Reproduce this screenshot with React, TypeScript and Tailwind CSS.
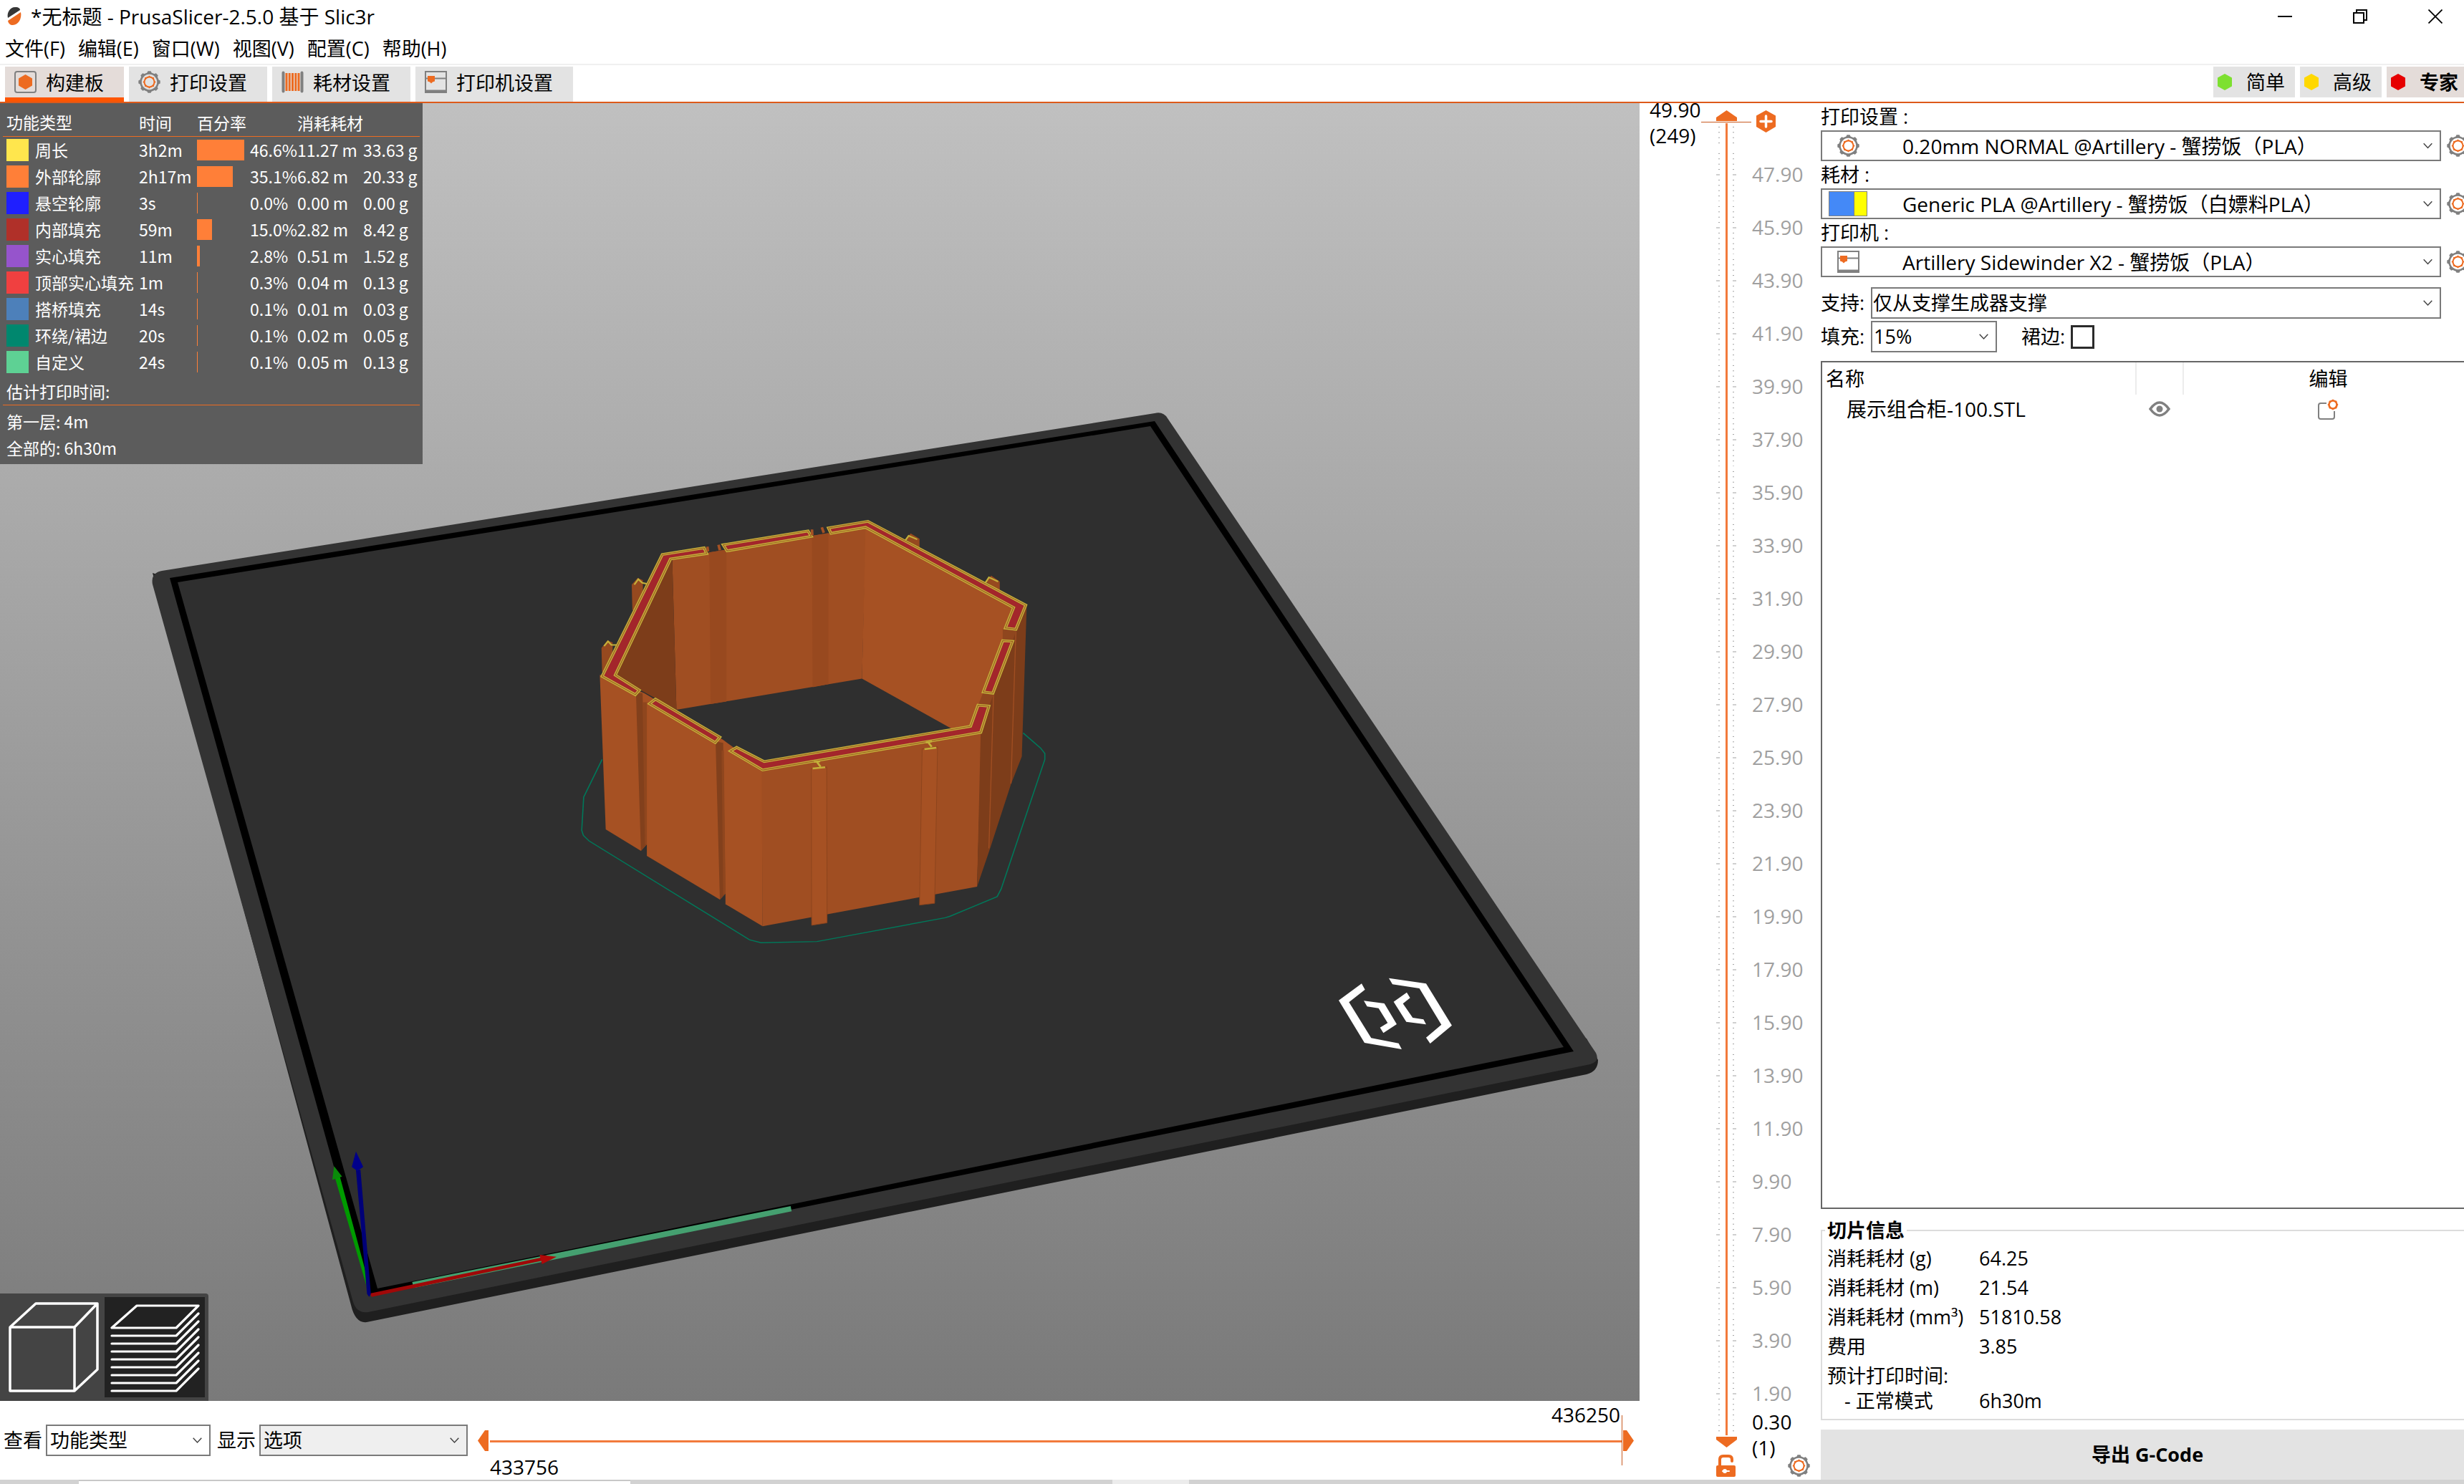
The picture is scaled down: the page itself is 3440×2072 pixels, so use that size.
import React, { useState } from 'react';

const FEATURES = [
  { name: '周长', color: '#ffe64d', time: '3h2m', share: 46.6, length: '11.27 m', weight: '33.63 g' },
  { name: '外部轮廓', color: '#ff7f38', time: '2h17m', share: 35.1, length: '6.82 m', weight: '20.33 g' },
  { name: '悬空轮廓', color: '#1f1fff', time: '3s', share: 0, length: '0.00 m', weight: '0.00 g' },
  { name: '内部填充', color: '#b03029', time: '59m', share: 15, length: '2.82 m', weight: '8.42 g' },
  { name: '实心填充', color: '#9654cc', time: '11m', share: 2.8, length: '0.51 m', weight: '1.52 g' },
  { name: '顶部实心填充', color: '#f04040', time: '1m', share: 0.3, length: '0.04 m', weight: '0.13 g' },
  { name: '搭桥填充', color: '#4d80ba', time: '14s', share: 0.1, length: '0.01 m', weight: '0.03 g' },
  { name: '环绕/裙边', color: '#00876e', time: '20s', share: 0.1, length: '0.02 m', weight: '0.05 g' },
  { name: '自定义', color: '#5ed194', time: '24s', share: 0.1, length: '0.05 m', weight: '0.13 g' }
];

const MENUS = ['文件(F)', '编辑(E)', '窗口(W)', '视图(V)', '配置(C)', '帮助(H)'];

const SLICE_INFO = [
  { label: '消耗耗材 (g)', value: '64.25' },
  { label: '消耗耗材 (m)', value: '21.54' },
  { label: '消耗耗材 (mm³)', value: '51810.58' },
  { label: '费用', value: '3.85' },
  { label: '预计打印时间:', value: '' }
];

// 47.90 down to 1.90
const LAYERS = Array.from({ length: 24 }, (_, i) => (47.9 - i * 2).toFixed(2));

const TEETH = [0, 45, 90, 135, 180, 225, 270, 315];

const GearIcon = () => (
  <svg className="h-[31px] w-[31px] shrink-0" viewBox="0 0 31 31" fill="none">
    <circle cx="15.5" cy="15.5" r="12" stroke="#808080" strokeWidth="2.6" />
    <circle cx="15.5" cy="15.5" r="7" stroke="#ed6b21" strokeWidth="2" />
    {TEETH.map((angle) => (
      <g key={angle} transform={`rotate(${angle} 15.5 15.5)`}>
        <path d="M12 3.5 L13.5 0.3 H17.5 L19 3.5 Z" fill="#808080" />
        <path d="M13.8 8.8 L14.8 6.8 H16.2 L17.2 8.8 Z" fill="#ed6b21" />
      </g>
    ))}
  </svg>
);

const PlaterIcon = () => (
  <svg className="h-[31px] w-[31px] shrink-0" viewBox="0 0 31 31">
    <rect x="1" y="1" width="29" height="29" rx="3" fill="none" stroke="#808080" strokeWidth="2" />
    <path d="M15.5 5 L25 10.5 V20.5 L15.5 26 L6 20.5 V10.5 Z" fill="#ed6b21" />
  </svg>
);

const SpoolIcon = () => (
  <svg className="h-[31px] w-[31px] shrink-0" viewBox="0 0 31 31">
    <path d="M2.5 2.5 V28.5 M28.5 2.5 V28.5" stroke="#808080" strokeWidth="4" strokeLinecap="round" />
    <path d="M7 3 V28 M11.2 3 V28 M15.5 3 V28 M19.8 3 V28 M24 3 V28" stroke="#ed6b21" strokeWidth="3" />
  </svg>
);

const PrinterIcon = () => (
  <svg className="h-[31px] w-[31px] shrink-0" viewBox="0 0 31 31">
    <rect x="1" y="1" width="29" height="29" fill="none" stroke="#808080" strokeWidth="2" />
    <path d="M1 10.5 H30" stroke="#808080" strokeWidth="2" />
    <path d="M0 26.5 H31 V31 H0 Z" fill="#808080" />
    <path d="M4 7 H14 V14.5 L11 15.5 L9 17.5 L7 15.5 L4 14.5 Z" fill="#ed6b21" />
  </svg>
);

const Hexagon = ({ className }: { className: string }) => (
  <svg className={`h-[23px] w-5 shrink-0 ${className}`} viewBox="0 0 20 23" fill="currentColor">
    <path d="M10 0 L20 5.5 V17.5 L10 23 L0 17.5 V5.5 Z" />
  </svg>
);

const Caret = () => (
  <svg className="pointer-events-none absolute top-0 right-3 h-full w-[13px]" viewBox="0 0 13 8" fill="none" stroke="#444" strokeWidth="1.5">
    <path d="M0.7 0.8 L6.5 7 L12.3 0.8" />
  </svg>
);

type PickerProps = {
  id: string;
  value: string;
  className?: string;
  selectClass?: string;
  icon?: React.ReactNode;
};

const Picker = ({ id, value, className = '', selectClass = 'bg-white pl-1', icon }: PickerProps) => (
  <div className={`relative ${className}`}>
    <select id={id} defaultValue={value} className={`h-full w-full appearance-none border-2 border-[#7a7a7a] leading-9 text-black outline-none ${selectClass}`}>
      <option>{value}</option>
    </select>
    {icon && <div className="pointer-events-none absolute inset-y-0 left-[11px] flex w-[54px] items-center justify-center">{icon}</div>}
    <Caret />
  </div>
);

const TitleBar = () => (
  <header>
    <div className="flex h-[45px] items-center">
      <svg className="ml-2 h-[27px] w-[23px]" viewBox="0 0 23 27">
        <path d="M3 16 C1 8 7 0 14 1 C18 1 20 3 20 5 Z" fill="#363636" />
        <path d="M21 8 C23 17 17 26 10 26 C6 26 4 24 3 20 Z" fill="#ed6b21" />
      </svg>
      <h1 className="ml-3 flex-1 text-[28px]">*无标题 - PrusaSlicer-2.5.0 基于 Slic3r</h1>
      <div className="flex gap-[85px] pr-[30px]">
        <button aria-label="最小化">
          <svg className="h-5 w-5" viewBox="0 0 20 20"><path d="M0 10 H20" stroke="#000" strokeWidth="2" /></svg>
        </button>
        <button aria-label="还原">
          <svg className="h-5 w-5" viewBox="0 0 20 20" fill="none" stroke="#000" strokeWidth="2">
            <path d="M1 5 H15 V19 H1 Z M5 5 V1 H19 V15 H15" />
          </svg>
        </button>
        <button aria-label="关闭">
          <svg className="h-5 w-5" viewBox="0 0 20 20"><path d="M0.5 0.5 L19.5 19.5 M19.5 0.5 L0.5 19.5" stroke="#000" strokeWidth="1.8" /></svg>
        </button>
      </div>
    </div>
    <nav className="flex h-[46px] items-end gap-[18px] border-b-2 border-[#f0f0f0] px-[7px] pb-[3px]">
      {MENUS.map((menu) => (
        <button key={menu}>{menu}</button>
      ))}
    </nav>
  </header>
);

const TABS = [
  { label: '构建板', icon: <PlaterIcon /> },
  { label: '打印设置', icon: <GearIcon /> },
  { label: '耗材设置', icon: <SpoolIcon /> },
  { label: '打印机设置', icon: <PrinterIcon /> }
];

const MODES = [
  { label: '简单', color: 'text-[#7de030]' },
  { label: '高级', color: 'text-[#ffd800]' },
  { label: '专家', color: 'text-[#e60000]' }
];

const TabBar = () => {
  const [tab, setTab] = useState('构建板');
  const [mode, setMode] = useState('专家');

  return (
    <div className="flex h-[53px] items-start justify-between border-b-2 border-[#dd5a1a] pt-[2px] pl-[7px]">
      <div className="flex h-full gap-[7px]">
        {TABS.map(({ label, icon }) => (
          <button
            key={label}
            onClick={() => setTab(label)}
            className={`flex items-start gap-[13px] border-b-[6px] px-[13px] pt-[6px] pr-7 ${
              tab === label ? 'border-[#ff5500] bg-[#e4dcd9]' : 'border-[#e3e3e3] bg-[#e3e3e3]'
            }`}
          >
            {icon}
            <span className="leading-[34px]">{label}</span>
          </button>
        ))}
      </div>
      <div className="-mr-[6px] flex gap-[7px]">
        {MODES.map(({ label, color }) => (
          <button
            key={label}
            onClick={() => setMode(label)}
            className={`flex h-[43px] w-[114px] items-center gap-5 pl-[6px] ${mode === label ? 'bg-[#e4dcd9] font-bold' : 'bg-[#e3e3e3]'}`}
          >
            <Hexagon className={color} />
            {label}
          </button>
        ))}
      </div>
    </div>
  );
};

const WALLS = [
  'M442 178 L315 200 L132 604 L233 665 L245 650 L172 600 L340 215 L450 197 Z',
  'M500 168 L758 122 L768 140 L512 188 Z',
  'M820 112 L940 90 L1420 368 L1390 448 L1358 444 L1383 376 L933 110 L828 130 Z',
  'M1350 486 L1380 488 L1320 660 L1291 656 Z',
  'M1275 700 L1308 703 L1283 790 L620 915 L522 852 L541 840 L625 887 L1252 770 Z',
  'M294 680 L490 806 L476 824 L276 695 Z'
];

const Scene = () => (
  <svg className="absolute inset-0 h-full w-full" viewBox="0 144 2289 1812" preserveAspectRatio="xMidYMid slice">
    {/* print bed */}
    <path d="M213 800 L490 1822 Q496 1848 512 1846 L2215 1500 Q2231 1496 2231 1480 L2215 1450 Z" fill="#1f1f1f" />
    <path d="M226 797 L1612 577 Q1624 574 1630 584 L2228 1470 Q2234 1482 2220 1486 L514 1832 Q498 1834 493 1818 L213 816 Q210 800 226 797 Z" fill="#333333" />
    <path d="M237 807 L1612 588 L2197 1468 L516 1808 Z" fill="#000000" />
    <path d="M248 813 L1606 595 L2183 1462 L527 1799 Z" fill="#2f2f2f" />

    {/* bed logo */}
    <g transform="translate(1820 1320) scale(0.3333)" fill="#ffffff">
      <path d="M243 160 L257 185 L190 238 L283 388 L398 410 L411 435 L255 408 L147 230 Z" />
      <path d="M357 137 L513 160 L621 335 L530 411 L513 386 L577 332 L485 180 L372 163 Z" />
      <path d="M252 232 L338 243 L390 330 L334 367 L320 344 L352 325 L314 263 L266 256 Z" />
      <path d="M432 197 L446 220 L416 244 L457 303 L502 310 L513 331 L430 320 L377 236 Z" />
    </g>

    {/* purge line and axes */}
    <g transform="translate(400 1560) scale(0.4847 0.3333)">
      <path d="M362 690 L1452 372 L1455 394 L366 715 Z" fill="#45a070" />
      <path d="M240 738 L732 588 L736 601 L245 752 Z" fill="#a00808" />
      <path d="M729 576 L778 584 L736 615 Z" fill="#b00808" />
      <path d="M140 255 L154 250 L236 690 L232 715 Z" fill="#009a00" />
      <path d="M137 205 L160 248 L132 262 Z" fill="#0a8a0a" />
      <path d="M200 222 L213 220 L243 740 L238 752 L232 740 Z" fill="#000078" />
      <path d="M200 143 L221 208 L204 225 L188 208 Z" fill="#00008a" />
    </g>

    {/* sliced model */}
    <g transform="translate(780 690) scale(0.4592 0.4209)">
      <path
        d="M132 880 L76 1005 L70 1115 L75 1132 L92 1150 L580 1478 L615 1488 L785 1484 L1175 1405 L1190 1400 L1333 1335 L1345 1310 L1478 880 L1478 860 L1465 842 L1412 792"
        fill="none"
        stroke="#00785a"
        strokeWidth="3.5"
      />
      <path d="M222 300 L240 278 L256 285 L256 380 L224 385 Z M130 510 L148 485 L164 492 L164 590 L132 590 Z" fill="#96491f" />
      <path d="M1055 150 L1070 130 L1097 148 L1097 180 Z M1298 290 L1315 270 L1341 290 L1341 325 Z" fill="#96491f" />
      <path d="M230 300 L242 282 L254 294 L272 298 M138 504 L150 488 L160 500 L180 500 M1052 156 L1064 138 L1090 150 M1296 296 L1308 276 L1336 290" fill="none" stroke="#c4b03a" strokeWidth="5" />
      <path d="M345 213 L935 109 L922 612 L358 715 Z" fill="#a04e22" />
      <path d="M458 193 L510 184 L510 688 L462 696 Z M770 138 L820 129 L820 630 L772 640 Z" fill="#98491f" />
      <path d="M345 210 L358 715 L172 604 Z" fill="#7d3d1a" />
      <path d="M933 104 L1390 372 L1255 775 L1195 778 L922 612 Z" fill="#a65123" />
      <path d="M125 600 L132 600 L260 660 L500 815 L620 910 L620 1433 L507 1360 L507 1325 L490 1345 L268 1200 L268 1162 L250 1183 L143 1112 Z" fill="#a65123" />
      <path d="M235 660 L255 660 L268 1162 L250 1183 Z M477 820 L500 825 L507 1325 L490 1345 Z" fill="#82401c" />
      <path d="M255 690 L268 690 L268 1162 L262 1162 Z M495 850 L502 850 L507 1325 L500 1330 Z" fill="#8f461e" />
      <path d="M617 910 L1286 788 L1272 1302 L620 1433 Z" fill="#a04e22" />
      <path d="M1283 788 L1308 690 L1380 480 L1423 368 L1408 870 L1375 962 L1310 1180 L1272 1302 Z" fill="#7d3d1a" />
      <path d="M1322 665 L1308 1175 M1390 455 L1375 960" stroke="#a04e22" strokeWidth="3" />
      <path d="M1350 448 L1392 450 L1380 487 L1350 485 Z M1290 660 L1322 664 L1308 703 L1275 700 Z" fill="#8f461e" />
      <path d="M768 910 L815 905 L816 1422 L769 1430 Z M1105 845 L1152 838 L1143 1357 L1097 1363 Z" fill="#a65123" stroke="#8a431d" strokeWidth="2" />
      {/* top layer: wall outlines with infill between them */}
      {WALLS.map((d) => (
        <g key={d}>
          <path d={d} fill="#a3262b" stroke="#c4b03a" strokeWidth="9" />
          <path d={d} fill="none" stroke="#9c5a24" strokeWidth="2.5" />
        </g>
      ))}
      <path d="M776 888 L795 886 M785 888 L796 904 M772 910 L810 906 M1116 824 L1135 820 M1124 824 L1134 838 M1112 846 L1148 841" stroke="#c4b03a" strokeWidth="6" />
      <path d="M452 174 L454 190 M486 168 L490 186 M770 117 L771 136 M800 110 L806 128" stroke="#a65123" strokeWidth="8" />
    </g>
  </svg>
);

const Legend = () => (
  <section className="relative w-[590px] bg-[#5c5c5c] px-1 pt-2 pb-1 font-['Noto_Sans_CJK_SC',sans-serif] text-[23px] leading-[37px] text-white">
    <table className="w-full table-fixed border-collapse text-left whitespace-nowrap">
      <colgroup>
        <col className="w-[190px]" />
        <col className="w-[81px]" />
        <col className="w-[74px]" />
        <col className="w-[66px]" />
        <col className="w-[92px]" />
        <col />
      </colgroup>
      <thead>
        <tr className="border-b border-[#ed6b21]">
          <th className="pb-px pl-[5px] font-normal">功能类型</th>
          <th className="font-normal">时间</th>
          <th className="font-normal" colSpan={2}>百分率</th>
          <th className="font-normal" colSpan={2}>消耗耗材</th>
        </tr>
      </thead>
      <tbody>
        {FEATURES.map((feature) => (
          <tr key={feature.name}>
            <td className="p-0">
              <div className="flex items-center gap-[9px] pl-[5px]">
                <span className="h-[31px] w-[31px]" style={{ backgroundColor: feature.color }} />
                {feature.name}
              </div>
            </td>
            <td className="p-0">{feature.time}</td>
            <td className="p-0">
              <div className="h-[29px] min-w-px bg-[#ff7f38]" style={{ width: Math.round((feature.share / 46.6) * 66) }} />
            </td>
            <td className="p-0">{feature.share.toFixed(1)}%</td>
            <td className="p-0">{feature.length}</td>
            <td className="p-0">{feature.weight}</td>
          </tr>
        ))}
      </tbody>
    </table>
    <p className="border-b border-[#ed6b21] pt-1 pl-[5px]">估计打印时间:</p>
    <p className="pt-1 pl-[5px]">第一层: 4m</p>
    <p className="pl-[5px]">全部的: 6h30m</p>
  </section>
);

const ViewSwitch = () => (
  <div className="absolute bottom-0 left-0 flex rounded-tr bg-[#444] py-[5px] pr-[5px]">
    <button aria-label="3D 编辑视图" className="h-[140px] w-[146px]">
      <svg className="h-full w-full" viewBox="0 1811 146 140" fill="none" stroke="#fff" strokeWidth="3.5" strokeLinejoin="round">
        <path d="M14 1853 H104 V1942 H14 Z M14 1853 L50 1820 H136 V1912 L104 1942 M104 1853 L136 1820" />
      </svg>
    </button>
    <button aria-label="预览" className="h-[140px] w-[140px] bg-[#222]">
      <svg className="h-full w-full" viewBox="146 1811 140 140" fill="none" stroke="#fff" strokeWidth="3.2" strokeLinecap="round" strokeLinejoin="round">
        <path d="M156 1854 H246 L277 1823 H191 Z" />
        {[0, 1, 2, 3, 4, 5, 6, 7].map((i) => (
          <path key={i} d={`M156 ${1865 + i * 11} H246 L277 ${1834 + i * 11}`} />
        ))}
      </svg>
    </button>
  </div>
);

const BottomBar = () => (
  <div className="flex h-[110px] items-center pl-[5px]">
    <label htmlFor="view-type">查看</label>
    <Picker id="view-type" value="功能类型" className="ml-[5px] h-11 w-[230px]" />
    <label htmlFor="show-options" className="ml-[9px]">显示</label>
    <Picker id="show-options" value="选项" className="ml-[5px] h-11 w-[291px]" selectClass="bg-[#efefef] pl-1" />
    <div className="relative ml-[14px] flex flex-1 items-center">
      <svg className="h-[29px] w-[15px]" viewBox="0 0 15 29"><path d="M0 14.5 L10 0 H15 V29 H10 Z" fill="#ed6b21" /></svg>
      <div className="ml-[2px] flex-1 text-[28px] leading-9">
        <div className="flex h-[54px] justify-end pr-[2px]">436250</div>
        <div className="h-[3px] bg-[#f27a3c]" />
        <div className="flex h-[52px] items-end">433756</div>
      </div>
      <div className="h-[70px] w-px bg-[#c85a20]" />
      <svg className="mr-[8px] ml-px h-[29px] w-[15px]" viewBox="0 0 15 29"><path d="M15 14.5 L5 0 H0 V29 H5 Z" fill="#ed6b21" /></svg>
      <input type="range" aria-label="移动范围" min={433756} max={436250} defaultValue={436250} className="absolute inset-0 h-full w-full opacity-0" />
    </div>
  </div>
);

const Ticks = ({ viewBox, from, to }: { viewBox: string; from: number; to: number }) => (
  <svg className="h-full w-[29px] shrink-0" viewBox={viewBox} preserveAspectRatio="none" stroke="#a0a0a0" strokeWidth="1">
    {Array.from({ length: to - from + 1 }, (_, i) => from + i).map((n) => {
      const y = 37 + n * 7.4;
      return <path key={n} d={n === 0 ? `M0 ${y} H5 M23 ${y} H28` : `M3 ${y} H5 M23 ${y} H25`} />;
    })}
  </svg>
);

const LayerSlider = () => (
  <div className="relative flex w-[251px] shrink-0 flex-col text-[28px]">
    <div className="flex h-[63px] items-end">
      <div className="w-[107px] pl-[14px] leading-9">
        49.90
        <br />
        (249)
      </div>
      <div className="h-[35px]"><Ticks viewBox="0 39 29 35" from={1} to={4} /></div>
      <button aria-label="添加换色" className="mb-[22px] ml-[27px]">
        <svg className="h-[31px] w-[27px]" viewBox="0 0 27 31">
          <path d="M13.5 0 L27 7.5 V23 L13.5 31 L0 23 V7.5 Z" fill="#ed6b21" />
          <path d="M6 15.5 H21 M13.5 8 V23" stroke="#fff" strokeWidth="3.5" strokeLinecap="round" />
        </svg>
      </button>
    </div>
    {LAYERS.map((z) => (
      <div key={z} className="flex min-h-0 flex-1 items-center pl-[107px] text-[#a0a0a0]">
        <Ticks viewBox="0 0 29 74" from={-4} to={5} />
        <span className="ml-[21px] pb-[3px] leading-9">{z}</span>
      </div>
    ))}
    <div className="flex h-[83px] items-start pl-[107px]">
      <div className="flex w-[29px] flex-col">
        <div className="h-[23px]"><Ticks viewBox="0 0 29 23" from={-4} to={-3} /></div>
        <svg className="h-[15px] w-[29px]" viewBox="0 0 29 15"><path d="M0 0 H29 V4 L14.5 15 L0 4 Z" fill="#ed6b21" /></svg>
        <button aria-label="锁定" className="mt-[10px]">
          <svg className="h-[31px] w-[27px]" viewBox="0 0 27 31">
            <path d="M5 16 V7 Q5 2 10 2 H17 Q22 2 22 7 V9" fill="none" stroke="#ed6b21" strokeWidth="4" strokeLinecap="round" />
            <rect x="0" y="15" width="27" height="16" rx="2" fill="#ed6b21" />
            <path d="M9 23 H18" stroke="#fff" strokeWidth="2" strokeLinecap="round" />
            <circle cx="12" cy="23" r="3" fill="#fff" />
          </svg>
        </button>
      </div>
      <div className="-mt-4 ml-[21px] w-[50px] leading-9">
        0.30
        <br />
        (1)
      </div>
      <button aria-label="设置" className="mt-12"><GearIcon /></button>
    </div>

    {/* track and upper thumb lie over the tick marks */}
    <div className="absolute top-7 bottom-[62px] left-[120px] w-[3px] bg-[#f27a3c]" />
    <svg className="absolute top-[10px] left-[86px] h-[17px] w-[70px]" viewBox="0 0 70 17">
      <path d="M21 15 V10 L35.5 0 L50 10 V15 Z" fill="#ed6b21" />
      <path d="M0 16.5 H70" stroke="#c85a20" strokeWidth="1" />
    </svg>
    <input type="range" aria-label="层范围" min={0.3} max={49.9} step={0.2} defaultValue={49.9} className="absolute top-7 bottom-20 left-[107px] w-[29px] opacity-0" />
  </div>
);

type PresetProps = { id: string; label: string; value: string; icon: React.ReactNode };

const Preset = ({ id, label, value, icon }: PresetProps) => (
  <div>
    <label htmlFor={id} className="block h-[38px] leading-[38px]">{label} :</label>
    <div className="flex items-center gap-2 pr-[7px]">
      <Picker id={id} value={value} className="h-[43px] flex-1 text-[28px]" selectClass="bg-white pl-28" icon={icon} />
      <button aria-label={`编辑${label}`}><GearIcon /></button>
    </div>
  </div>
);

const Sidebar = () => (
  <aside className="-mr-[14px] flex w-[914px] shrink-0 flex-col pl-[2px]">
    <Preset id="print" label="打印设置" value="0.20mm NORMAL @Artillery - 蟹捞饭（PLA）" icon={<GearIcon />} />
    <Preset
      id="filament"
      label="耗材"
      value="Generic PLA @Artillery - 蟹捞饭（白嫖料PLA）"
      icon={
        <div className="flex h-[35px] w-[54px] border border-[#808080]">
          <span className="flex-1 border-r border-[#808080] bg-[#4489f7]" />
          <span className="w-[17px] bg-[#ffff00]" />
        </div>
      }
    />
    <Preset id="printer" label="打印机" value="Artillery Sidewinder X2 - 蟹捞饭（PLA）" icon={<PrinterIcon />} />

    <div className="mt-[14px] flex items-center pr-[46px]">
      <label htmlFor="support" className="w-[70px]">支持:</label>
      <Picker id="support" value="仅从支撑生成器支撑" className="h-11 flex-1" selectClass="bg-white pl-px" />
    </div>
    <div className="mt-[3px] flex items-center">
      <label htmlFor="infill" className="w-[70px]">填充:</label>
      <Picker id="infill" value="15%" className="h-11 w-[176px]" selectClass="bg-white pl-[2px]" />
      <label htmlFor="brim" className="ml-[34px] w-[69px]">裙边:</label>
      <input id="brim" type="checkbox" className="h-[33px] w-[33px] appearance-none border-[3px] border-[#2b2b2b] bg-white" />
    </div>

    <div className="mt-3 flex-1 border-2 border-[#666]">
      <table className="w-full table-fixed">
        <colgroup>
          <col className="w-[438px]" />
          <col className="w-[66px]" />
          <col />
        </colgroup>
        <thead>
          <tr className="h-[45px]">
            <th className="border-r-2 border-[#ececec] pl-[5px] text-left font-normal">名称</th>
            <th className="border-r-2 border-[#ececec]" />
            <th className="font-normal">编辑</th>
          </tr>
        </thead>
        <tbody>
          <tr className="h-10">
            <td className="pl-[34px] text-[28px]">展示组合柜-100.STL</td>
            <td>
              <svg className="mx-auto h-[22px] w-[30px]" viewBox="0 0 30 22" fill="none" stroke="#808080">
                <path d="M2 11 Q15 -7 28 11 Q15 29 2 11 Z" strokeWidth="3.5" />
                <circle cx="15" cy="11" r="4.5" fill="#808080" stroke="none" />
              </svg>
            </td>
            <td>
              <svg className="mx-auto h-[29px] w-[29px]" viewBox="0 0 29 29" fill="none">
                <path d="M12 6 H4 Q1 6 1 9 V25 Q1 28 4 28 H20 Q23 28 23 25 V17" stroke="#808080" strokeWidth="2" />
                <circle cx="21" cy="8" r="5.5" stroke="#ed6b21" strokeWidth="2.6" />
                {TEETH.map((angle) => (
                  <path key={angle} d="M19.5 2.5 L20.2 0.8 H21.8 L22.5 2.5 Z" fill="#ed6b21" transform={`rotate(${angle} 21 8)`} />
                ))}
              </svg>
            </td>
          </tr>
        </tbody>
      </table>
    </div>

    <fieldset className="mt-3 border-2 border-[#dcdcdc] pb-[10px]">
      <legend className="ml-1 px-[3px] leading-9 font-bold">切片信息</legend>
      <dl className="grid grid-cols-[212px_1fr] pl-[7px] leading-[41px] whitespace-nowrap">
        {SLICE_INFO.map(({ label, value }) => (
          <React.Fragment key={label}>
            <dt>{label}</dt>
            <dd>{value}</dd>
          </React.Fragment>
        ))}
        <dt className="pl-6 leading-[30px]">- 正常模式</dt>
        <dd className="leading-[30px]">6h30m</dd>
      </dl>
    </fieldset>
    <button className="mt-[13px] h-[70px] bg-[#e3e3e3] font-bold">导出 G-Code</button>
  </aside>
);

const App = () => (
  <div className="flex h-screen flex-col overflow-hidden bg-white font-['Open_Sans','Noto_Sans_CJK_SC',sans-serif] text-[27px] leading-9 text-black">
    <TitleBar />
    <TabBar />
    <main className="flex min-h-0 flex-1">
      <div className="flex min-w-0 flex-1 flex-col">
        <div className="relative min-h-0 flex-1 bg-linear-to-b from-[#c0c0c0] to-[#7a7a7a]">
          <Scene />
          <Legend />
          <ViewSwitch />
        </div>
        <BottomBar />
      </div>
      <LayerSlider />
      <Sidebar />
    </main>
    <footer className="flex h-[6px] bg-[#d2d2d2]">
      <div className="ml-[110px] w-[770px] border-t-2 border-[#c8c8c8] bg-white" />
      <div className="ml-[673px] w-[107px] bg-[#ececec]" />
    </footer>
  </div>
);

export default App;
